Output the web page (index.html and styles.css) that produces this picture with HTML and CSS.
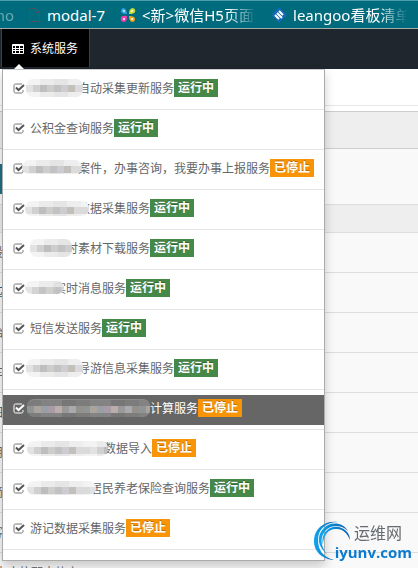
FILE: index.html
```html
<!DOCTYPE html>
<html lang="zh-CN">
<head>
<meta charset="utf-8">
<title>系统服务</title>
<link rel="stylesheet" href="styles.css">
</head>
<body>
<div class="bookmarks">
  <a class="bookmark bookmark-cut" href="#">no</a>
  <a class="bookmark" href="#">
    <svg class="file-icon" viewBox="0 0 11 14"><path d="M.5.5h6l4 4v9H.5zM6.500.5v4h4" fill="none" stroke="#4f525e"/></svg>
    <span>modal-7</span>
  </a>
  <a class="bookmark bookmark-fade" href="#">
    <svg viewBox="0 0 16 16"><path d="M3 1q3 0 4 6-6 0-6-3 0-2 2-3z" fill="#2fa9ee"/><path d="M9 7q0-6 4-6 3 1 2 4-1 2-6 2z" fill="#c6dc3a"/><path d="M1 10q2-2 6-1 0 6-3 6-4 0-3-5z" fill="#ee3fae"/><path d="M9 9q6 0 6 3 0 3-3 3-3-1-3-6z" fill="#f5a623"/><circle cx="4" cy="4" r="1" fill="#f7dfef"/><circle cx="12" cy="4" r="1" fill="#fff"/><circle cx="4" cy="12" r="1" fill="#fff"/><circle cx="12" cy="12" r="1" fill="#fff"/></svg>
    <span>&lt;新&gt;微信H5页面</span>
  </a>
  <a class="bookmark bookmark-fade" href="#">
    <svg viewBox="0 0 16 16"><path d="M8 0l8 8-8 8-8-8z" fill="#1268b3"/><path d="M4 8l4 4M6 6l5 5M8 4l4 4" stroke="#fff" stroke-width="2"/></svg>
    <span>leangoo看板清单</span>
  </a>
</div>
<nav class="navbar">
  <button class="tab" type="button">
    <svg viewBox="0 0 12 10"><path fill="#fff" fill-rule="evenodd" d="M1 0h10q1 0 1 1v8q0 1-1 1H1q-1 0-1-1V1q0-1 1-1zM1 2v2h2V2zM4 2v2h3V2zM8 2v2h3V2zM1 5v1h2V5zM4 5v1h3V5zM8 5v1h3V5zM1 7v2h2V7zM4 7v2h3V7zM8 7v2h3V7z"/></svg>
    <span>系统服务</span>
  </button>
  <ul class="menu">
    <li><label><input type="checkbox" checked><i class="mask mask-a"></i><span>自动采集更新服务</span><b class="badge running">运行中</b></label></li>
    <li><label><input type="checkbox" checked><span>公积金查询服务</span><b class="badge running">运行中</b></label></li>
    <li><label><input type="checkbox" checked><i class="mask mask-b"></i><span>案件，办事咨询，我要办事上报服务</span><b class="badge stopped">已停止</b></label></li>
    <li><label><input type="checkbox" checked><i class="mask mask-c"></i><span>数据采集服务</span><b class="badge running">运行中</b></label></li>
    <li><label><input type="checkbox" checked><i class="mask mask-d"></i><span>时素材下载服务</span><b class="badge running">运行中</b></label></li>
    <li><label><input type="checkbox" checked><i class="mask mask-e"></i><span>实时消息服务</span><b class="badge running">运行中</b></label></li>
    <li><label><input type="checkbox" checked><span>短信发送服务</span><b class="badge running">运行中</b></label></li>
    <li><label><input type="checkbox" checked><i class="mask mask-a"></i><span>导游信息采集服务</span><b class="badge running">运行中</b></label></li>
    <li class="active"><label><input type="checkbox" checked><i class="mask mask-f"></i><span>计算服务</span><b class="badge stopped">已停止</b></label></li>
    <li><label><input type="checkbox" checked><i class="mask mask-g"></i><span>数据导入</span><b class="badge stopped">已停止</b></label></li>
    <li><label><input type="checkbox" checked><i class="mask mask-h"></i><span>居民养老保险查询服务</span><b class="badge running">运行中</b></label></li>
    <li><label><input type="checkbox" checked><span>游记数据采集服务</span><b class="badge stopped">已停止</b></label></li>
  </ul>
</nav>
<main>
  <div class="crumbs"></div>
  <div class="panel-head"></div>
  <div class="toolbar"><button type="button" aria-label="查询"></button></div>
  <div class="list-head"></div>
  <div class="row">股</div>
  <div class="row"><a href="#">匹</a></div>
  <div class="row">始</div>
  <div class="row">车</div>
  <div class="row"><a href="#">图</a></div>
  <div class="row">用</div>
  <div class="row">简</div>
  <div class="row">客</div>
  <div class="row row-last">大应信那宝体上</div>
</main>
<div class="logo">
  <svg viewBox="0 0 38 40"><defs><linearGradient id="g" x1="0" y1="0" x2="1" y2="0"><stop offset="0" stop-color="#13a6ee"/><stop offset="1" stop-color="#075fae"/></linearGradient></defs><g fill="url(#g)"><path d="M19 39C7 37 0 29 1 18C2 7 12-1 25 1C13 1 5 8 5 19C5 29 10 36 21 39z"/><path d="M14 33C5 26 3 16 10 8C17 0 30 1 35 10C29 4 19 3 13 9C7 15 7 25 14 33z"/><path d="M10 24C7 12 17 4 26 6C33 8 37 13 37 19C34 12 30 8 24 8C16 7 10 14 10 24z"/></g></svg>
  <div class="logo-text"><span>运维网</span><strong>iyunv.com</strong></div>
</div>
</body>
</html>
```
FILE: styles.css
```css
* { box-sizing: border-box; }
html { height: 100%; }
body {
  margin: 0;
  height: 100%;
  overflow: hidden;
  background: #f9f9f9;
  color: #666;
  font: 12px/18px "Liberation Sans", "Noto Sans CJK SC", sans-serif;
}
a { color: inherit; text-decoration: none; }

.bookmarks {
  display: flex;
  align-items: center;
  height: 29px;
  overflow: hidden;
  background: #006b7d;
  border-top: 1px solid #4f9dab;
  border-bottom: 1px solid #a3aba8;
  color: #fff;
  font: 15px/20px "Noto Sans", "Noto Sans CJK SC", sans-serif;
  white-space: nowrap;
}
.bookmark { display: flex; align-items: center; gap: 6px; flex: none; margin-right: 15px; }
.bookmark svg { width: 16px; height: 16px; flex: none; }
.bookmark .file-icon { width: 11px; height: 14px; margin-right: 1px; }
.bookmark-cut { width: 14px; justify-content: flex-end; opacity: .4; }
.bookmark-fade span {
  width: 114px;
  -webkit-mask-image: linear-gradient(90deg, #000 75%, transparent);
  mask-image: linear-gradient(90deg, #000 75%, transparent);
}

.navbar { position: relative; height: 40px; padding-left: 1px; background: #20262d; }
.tab {
  position: relative;
  display: flex;
  align-items: center;
  gap: 6px;
  height: 38px;
  padding: 2px 11px 0 10px;
  border: 0 solid #3a4048;
  border-width: 0 1px;
  background: #000;
  color: #fff;
  font: inherit;
}
.tab svg { width: 12px; height: 10px; }
.tab::after {
  content: "";
  position: absolute;
  left: 12px;
  top: 35px;
  border: 5px solid transparent;
  border-top: 0;
  border-bottom-color: #fff;
}

.menu {
  position: absolute;
  z-index: 1;
  top: 40px;
  left: 2px;
  margin: 0;
  padding: 5px 0;
  list-style: none;
  background: #fff;
  border: 1px solid #aaa;
  border-top-color: #ccc;
  box-shadow: 0 5px 10px rgba(0, 0, 0, .2);
  white-space: nowrap;
}
.menu li { padding-bottom: 4px; margin-bottom: 5px; border-bottom: 1px solid #e5e5e5; }
.menu label { display: flex; align-items: center; height: 30px; padding: 0 10px 4px; }
.menu label span { line-height: 18px; padding-top: 2px; }
.menu .active label { background: #666; color: #fff; }
.menu input {
  appearance: none;
  flex: none;
  width: 12px;
  height: 11px;
  margin: 0 5px 0 0;
  background: url("data:image/svg+xml,%3Csvg xmlns='http://www.w3.org/2000/svg' viewBox='0 0 12 11'%3E%3Cpath d='M9 1H2.500Q1 1 1 2.500v6Q1 10 2.500 10h6Q10 10 10 8.500V7' fill='none' stroke='%23777'/%3E%3Cpath d='M3 4.500l2.500 2.500L11 2' fill='none' stroke='%23555' stroke-width='2'/%3E%3C/svg%3E");
}
.menu .active input { filter: brightness(0) invert(1); }
.badge {
  height: 18px;
  padding: 0 4px;
  color: #fff;
  line-height: 18px;
  text-shadow: 0 -1px 0 rgba(0, 0, 0, .25);
}
.running { background: #468847; }
.stopped { background: #f89406; }

/* Pixelated patches over the private part of a service name */
.mask { position: relative; flex: none; width: 48px; height: 18px; }
.mask::before {
  content: "";
  position: absolute;
  inset: 0 -5px 0 -4px;
  border-radius: 7px;
  background:
    linear-gradient(90deg, #e2e2e2 7px, #d0d0d0 7px 14px, #bfbebe 14px 21px, #cfcdcb 21px 28px, #c2c2c4 28px 35px, #cdccd0 35px 42px, #c3bfbb 42px 49px, #dadada 49px) 0 6px / 63px 7px repeat-x,
    linear-gradient(90deg, #f3f3f3 14px, #ebebeb 14px 28px, #e5e5e5 28px 42px, #eee 42px) 0 0 / 56px 18px #eee;
}
.mask-b::before { inset: 1px -4px 3px -8px; }
.mask-c::before { inset: 2px -11px 1px -5px; }
.mask-d { width: 36px; }
.mask-d::before { inset: 0 -6px 0 0; }
.mask-e { width: 24px; }
.mask-e::before { inset: 2px -10px 3px -5px; opacity: .9; }
.mask-f { width: 120px; }
.mask-f::before {
  inset: 0 0 0 -3px;
  border-top: 1px solid #8c8c8c;
  background:
    linear-gradient(90deg, #8f9494 7px, #aaa49c 7px 14px, #9a9ea6 14px 21px, #a79ba6 21px 28px, #bcacac 28px 35px, #999 35px 42px, #aaaaae 42px 49px, #94908c 49px) 0 6px / 56px 7px repeat-x,
    linear-gradient(90deg, #7c7c7c 14px, #838383 14px 35px, #777 35px) 0 0 / 49px 18px;
}
.mask-g { width: 74px; }
.mask-g::before { inset: 2px -4px 1px -3px; }
.mask-h { width: 60px; }
.mask-h::before { inset: 2px -6px 2px -3px; }

.crumbs { height: 37px; background: #fff; border-bottom: 1px solid #e4e7e7; }
.panel-head { height: 38px; margin-top: 5px; background: #eee; border: solid #ccc; border-width: 1px 0; box-shadow: 0 -5px #fff; }
.toolbar { height: 55px; padding-top: 15px; overflow: hidden; }
.toolbar button { display: block; width: 3px; height: 30px; padding: 0; border: 0; background: #1f6f88; }
.list-head { height: 29px; background: #eee; border: solid #ddd; border-width: 1px 0; }
.row { height: 40px; padding-top: 11px; border-bottom: 1px solid #ddd; text-indent: -9px; white-space: nowrap; }
.row a { color: #286080; }
.row-last { text-indent: -5px; border: 0; }

.logo { position: fixed; z-index: 2; right: 6px; bottom: 7px; display: flex; align-items: flex-end; }
.logo svg { width: 38px; height: 40px; margin-right: -16px; }
.logo-text { display: flex; flex-direction: column; align-items: flex-end; }
.logo-text span { padding-right: 10px; color: #666b70; font-size: 16px; line-height: 18px; }
.logo-text strong { color: #0b7bd0; font: bold 15px/18px "Open Sans", sans-serif; }
```
